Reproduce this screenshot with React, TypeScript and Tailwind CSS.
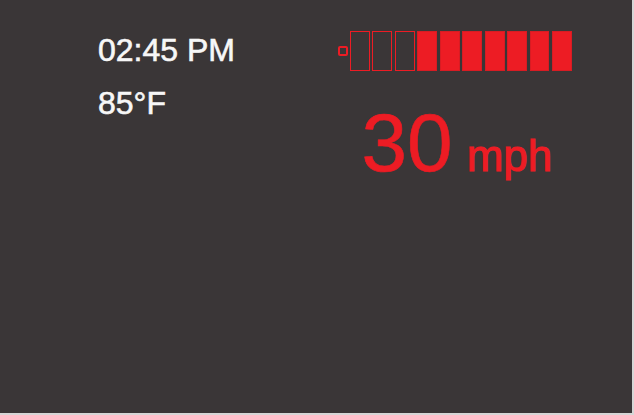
const BARS = 10
const EMPTY = 3

function SpeedBars() {
  return (
    <div className="flex items-center">
      <div className="h-[10px] w-[10px] rounded-[2px] border-2 border-[#ed1c24]" />
      <div className="ml-[2px] flex gap-[2.9px]">
        {Array.from({ length: BARS }).map((_, i) =>
          i < EMPTY ? (
            <div key={i} className="h-[40px] w-[19.6px] border-[1.6px] border-[#ed1c24]" />
          ) : (
            <div key={i} className="h-[40px] w-[19.6px] border border-[#d81c23] bg-[#ed1c24]" />
          ),
        )}
      </div>
    </div>
  )
}

export default function App() {
  return (
    <div className="h-[415px] w-[634px] bg-[#d6d6d6]">
      <div
        className="flex h-[413px] w-[632px] bg-[#3a3637]"
        style={{ fontFamily: '"Liberation Sans", Arial, sans-serif' }}
      >
        <div className="w-[338px] shrink-0 pl-[98px] pt-[24px] text-[32px] leading-[53px] text-[#f7f7f7] [-webkit-text-stroke:0.6px_#f7f7f7]">
          <div>02:45 PM</div>
          <div>85°F</div>
        </div>
        <div className="pt-[31px]">
          <SpeedBars />
          <div className="ml-[23.5px] mt-[30.6px] flex items-baseline gap-[14px] text-[#ed1c24]">
            <span className="text-[82px] leading-none [-webkit-text-stroke:0.6px_#ed1c24]">30</span>
            <span className="text-[44px] leading-none [-webkit-text-stroke:1px_#ed1c24]">mph</span>
          </div>
        </div>
      </div>
    </div>
  )
}
